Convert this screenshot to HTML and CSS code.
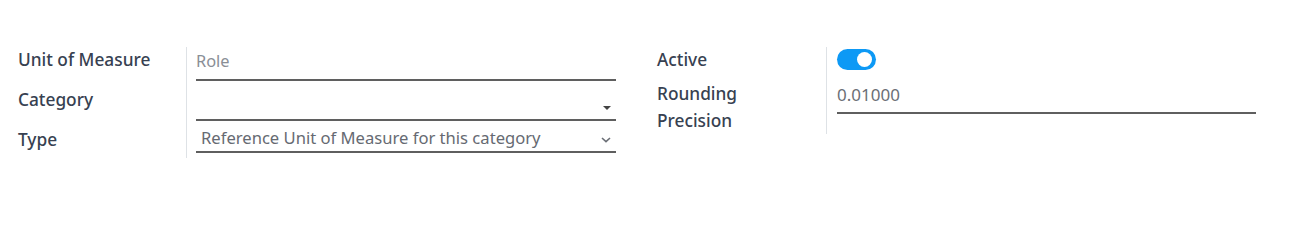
FILE: index.html
```html
<!DOCTYPE html>
<html lang="en">
<head>
<meta charset="UTF-8">
<title>Unit of Measure</title>
<link rel="stylesheet" href="styles.css">
</head>
<body>
<div class="sheet">
    <div class="group group-left">
        <div class="label row-1">Unit of Measure</div>
        <div class="cell row-1">
            <div class="field placeholder">Role</div>
        </div>

        <div class="label row-2">Category</div>
        <div class="cell row-2">
            <div class="field many2one"><span class="caret"></span></div>
        </div>

        <div class="label row-3">Type</div>
        <div class="cell row-3">
            <div class="field select">
                <span>Reference Unit of Measure for this category</span>
                <svg class="chevron" width="10" height="6" viewBox="0 0 10 6"><path d="M1 1 L5 4.6 L9 1" fill="none" stroke="#6b6f76" stroke-width="1.6"/></svg>
            </div>
        </div>
    </div>

    <div class="group group-right">
        <div class="label r-row-1">Active</div>
        <div class="cell r-row-1">
            <div class="toggle"><span class="knob"></span></div>
        </div>

        <div class="label r-row-2">Rounding<br>Precision</div>
        <div class="cell r-row-2">
            <div class="field number">0.01000</div>
        </div>
    </div>
</div>
</body>
</html>
```

FILE: styles.css
```css
body {
    margin: 0;
    padding: 0;
    background-color: #fff;
    font-family: "Noto Sans", Arial, sans-serif;
    font-size: 16px;
    color: #374151;
}

.sheet {
    display: grid;
    grid-template-columns: 598px 599px;
    column-gap: 41px;
    padding: 47px 18px 0;
}

.group {
    display: grid;
    grid-template-columns: 168px 1fr;
    align-content: start;
}

.group-right {
    grid-template-columns: 169px 1fr;
}

.label {
    font-weight: 500;
    font-size: 17.3px;
    line-height: 26px;
    color: #374151;
}

.cell {
    border-left: 1px solid #dee2e6;
    padding-left: 9px;
}

.group-right .cell {
    padding-left: 10px;
}

.row-1, .row-2 {
    height: 40px;
}

.row-3 {
    height: 31px;
}

.r-row-1 {
    height: 33px;
}

.r-row-2 {
    line-height: 27px;
    height: 54px;
}

.field {
    border-bottom: 2px solid #5f5f5f;
    line-height: 26px;
    padding: 1px 0 5px;
    height: 26px;
}

.placeholder {
    color: #8a8e96;
    font-size: 16.4px;
}

.many2one {
    position: relative;
}

.caret {
    position: absolute;
    right: 5px;
    top: 19px;
    width: 0;
    height: 0;
    border-left: 4px solid transparent;
    border-right: 4px solid transparent;
    border-top: 4px solid #444;
}

.select {
    display: flex;
    align-items: center;
    justify-content: space-between;
    line-height: 22px;
    height: 22px;
    padding: 0 5px 2px 5px;
    color: #666a72;
    font-size: 16.6px;
}

.chevron {
    margin-top: 3px;
}

.toggle {
    margin-top: 2px;
    width: 39px;
    height: 21px;
    border-radius: 11px;
    background-color: #0d99f5;
    position: relative;
}

.knob {
    position: absolute;
    right: 4px;
    top: 3px;
    width: 15px;
    height: 15px;
    border-radius: 50%;
    background-color: #fff;
}

.number {
    padding: 2px 0 4px;
    color: #6b6f76;
    font-size: 17px;
}
```
